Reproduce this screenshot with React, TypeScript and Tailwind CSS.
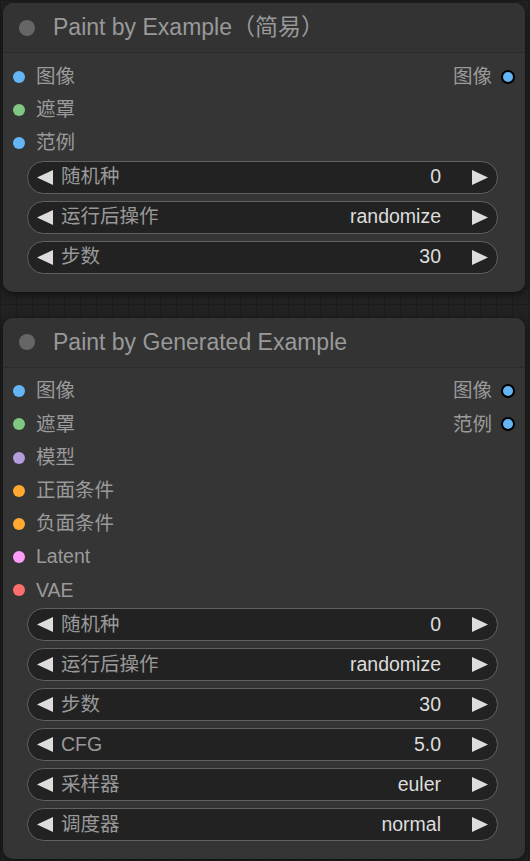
import React from 'react';

type Slot = { name: string; color: string };
type Widget = { label: string; value: string };

interface NodeProps {
  title: string;
  inputs: Slot[];
  outputs: Slot[];
  widgets: Widget[];
}

const font = { fontFamily: '"Liberation Sans", "Noto Sans CJK SC", sans-serif' };

function Arrow({ dir }: { dir: 'left' | 'right' }) {
  return (
    <svg width="16" height="15" viewBox="0 0 16 15" className="shrink-0">
      {dir === 'left' ? (
        <polygon points="16,0 16,15 0,7.5" fill="#dddddd" />
      ) : (
        <polygon points="0,0 0,15 16,7.5" fill="#dddddd" />
      )}
    </svg>
  );
}

function Node({ title, inputs, outputs, widgets }: NodeProps) {
  const rows = Math.max(inputs.length, outputs.length);

  return (
    <div className="w-[522px] rounded-[10px] bg-[#353535] shadow-[0_2px_8px_rgba(0,0,0,0.6)] overflow-hidden">
      {/* Заголовок */}
      <div className="h-[50px] bg-[#333333] border-b border-[#2b2b2b] flex items-center pl-[16px] gap-[18px]">
        <div className="w-4 h-4 rounded-full bg-[#666666]" />
        <div className="text-[23px] text-[#999999] leading-none">{title}</div>
      </div>

      <div className="pt-[7px] pb-[18px]">
        {/* Слоты */}
        {Array.from({ length: rows }).map((_, i) => {
          const input = inputs[i];
          const output = outputs[i];
          return (
            <div key={i} className="h-[33.2px] flex items-center justify-between">
              <div className="flex items-center gap-[11px] pl-[10px]">
                {input && (
                  <>
                    <div className="w-3 h-3 rounded-full" style={{ backgroundColor: input.color }} />
                    <span className="text-[19.5px] text-[#9a9a9a] leading-none">{input.name}</span>
                  </>
                )}
              </div>
              <div className="flex items-center gap-[9px] pr-[10px]">
                {output && (
                  <>
                    <span className="text-[19.5px] text-[#9a9a9a] leading-none">{output.name}</span>
                    <div
                      className="w-[14px] h-[14px] rounded-full border-2 border-black"
                      style={{ backgroundColor: output.color }}
                    />
                  </>
                )}
              </div>
            </div>
          );
        })}

        {/* Виджеты */}
        <div className="mt-[1px] flex flex-col gap-[7px] ml-[24px] mr-[27px]">
          {widgets.map((w) => (
            <div
              key={w.label}
              className="h-[33px] rounded-full bg-[#222222] border border-[#616161] flex items-center pl-[9px] pr-[9px]"
            >
              <Arrow dir="left" />
              <span className="ml-[8px] text-[19.5px] text-[#999999] leading-none">{w.label}</span>
              <span className="ml-auto text-[19.5px] text-[#dddddd] leading-none">{w.value}</span>
              <span className="ml-[31px]">
                <Arrow dir="right" />
              </span>
            </div>
          ))}
        </div>
      </div>
    </div>
  );
}

const IMAGE = '#64b5f6';
const MASK = '#81c784';

export default function App() {
  return (
    <div
      style={font}
      className="w-[530px] h-[861px] overflow-hidden bg-[#222222] bg-[linear-gradient(#1c1c1c_1px,transparent_1px),linear-gradient(90deg,#1c1c1c_1px,transparent_1px)] bg-[size:16px_16px] pl-[3px] pt-[3px] flex flex-col gap-[26px]"
    >
      <Node
        title="Paint by Example（简易）"
        inputs={[
          { name: '图像', color: IMAGE },
          { name: '遮罩', color: MASK },
          { name: '范例', color: IMAGE },
        ]}
        outputs={[{ name: '图像', color: IMAGE }]}
        widgets={[
          { label: '随机种', value: '0' },
          { label: '运行后操作', value: 'randomize' },
          { label: '步数', value: '30' },
        ]}
      />
      <Node
        title="Paint by Generated Example"
        inputs={[
          { name: '图像', color: IMAGE },
          { name: '遮罩', color: MASK },
          { name: '模型', color: '#b39ddb' },
          { name: '正面条件', color: '#ffa931' },
          { name: '负面条件', color: '#ffa931' },
          { name: 'Latent', color: '#ff9cf9' },
          { name: 'VAE', color: '#ff6e6e' },
        ]}
        outputs={[
          { name: '图像', color: IMAGE },
          { name: '范例', color: IMAGE },
        ]}
        widgets={[
          { label: '随机种', value: '0' },
          { label: '运行后操作', value: 'randomize' },
          { label: '步数', value: '30' },
          { label: 'CFG', value: '5.0' },
          { label: '采样器', value: 'euler' },
          { label: '调度器', value: 'normal' },
        ]}
      />
    </div>
  );
}
